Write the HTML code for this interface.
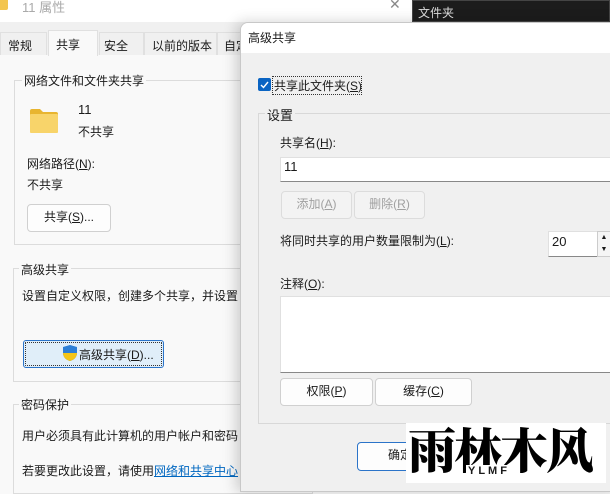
<!DOCTYPE html>
<html><head><meta charset="utf-8"><style>
*{margin:0;padding:0;box-sizing:border-box}
body{width:610px;height:483px;overflow:hidden;position:relative;background:#f9f9f9;font-family:"Liberation Sans","Noto Sans CJK SC",sans-serif;font-size:12px;color:#1a1a1a}
.a{position:absolute;white-space:nowrap}
.grp{position:absolute;border:1px solid #dcdcdc}
.lbl{position:absolute;background:inherit;padding:0 2px}
.btn{position:absolute;border:1px solid #d0d0d0;border-radius:4px;background:#fdfdfd;text-align:center;line-height:25px}
u{text-decoration:underline}
</style></head><body>
<div class="a" style="left:0;top:0;width:410px;height:22px;background:#fff"></div>
<div class="a" style="left:-6px;top:-2px;width:14px;height:12px;background:#f3c54f;border-radius:2px"></div>
<div class="a" style="left:22px;top:-3px;color:#aaa;font-size:13px">11 属性</div>
<div class="a" style="left:389px;top:-4px;color:#888;font-size:14px">✕</div>
<div class="a" style="left:412px;top:0;width:198px;height:22px;background:#1c1c1c;border:1px solid #444"></div>
<div class="a" style="left:418px;top:4px;color:#ddd;font-size:12px">文件夹</div>
<div class="a" style="left:0;top:22px;width:610px;height:33px;background:#f0f0f0"></div>
<div class="a" style="left:0;top:32px;width:47px;height:23px;border:1px solid #e0e0e0;border-bottom:none;padding:4px 7px">常规</div>
<div class="a" style="left:48px;top:30px;width:50px;height:26px;background:#f9f9f9;border:1px solid #e0e0e0;border-bottom:none;padding:5px 7px">共享</div>
<div class="a" style="left:99px;top:32px;width:45px;height:23px;border:1px solid #e0e0e0;border-bottom:none;padding:4px 4px">安全</div>
<div class="a" style="left:144px;top:32px;width:73px;height:23px;border:1px solid #e0e0e0;border-bottom:none;padding:4px 7px">以前的版本</div>
<div class="a" style="left:217px;top:32px;width:40px;height:23px;border:1px solid #e0e0e0;border-bottom:none;padding:4px 6px">自定</div>

<div class="grp" style="left:14px;top:80px;width:300px;height:165px"></div>
<div class="a" style="left:22px;top:72px;background:#f9f9f9;padding:0 2px">网络文件和文件夹共享</div>
<svg class="a" style="left:30px;top:108px" width="28" height="25"><path d="M0 3a2 2 0 0 1 2-2h8l3 3h13a2 2 0 0 1 2 2v2H0z" fill="#e8b530"/><rect x="0" y="6" width="28" height="19" rx="1" fill="#f8d46a"/></svg>
<div class="a" style="left:78px;top:102px;font-size:13px">11</div>
<div class="a" style="left:78px;top:123px">不共享</div>
<div class="a" style="left:27px;top:155px">网络路径(<u>N</u>):</div>
<div class="a" style="left:27px;top:176px">不共享</div>
<div class="btn" style="left:27px;top:204px;width:84px;height:28px">共享(<u>S</u>)...</div>

<div class="grp" style="left:13px;top:268px;width:300px;height:114px"></div>
<div class="a" style="left:19px;top:261px;background:#f9f9f9;padding:0 2px">高级共享</div>
<div class="a" style="left:22px;top:287px">设置自定义权限，创建多个共享，并设置</div>
<div class="a" style="left:23px;top:340px;width:141px;height:28px;border:1px solid #2b74c9;border-radius:3px;background:#e0eef9;outline:1px dotted #333;outline-offset:-3px"></div>
<svg class="a" style="left:63px;top:345px" width="14" height="16"><path d="M7 0L14 2v6c0 4-3 7-7 8C3 15 0 12 0 8V2z" fill="#2d7fd6"/><path d="M7 0v16C3 15 0 12 0 8h7z" fill="#f5c518"/><path d="M7 8h7c0 4-3 7-7 8z" fill="#f5c518"/></svg>
<div class="a" style="left:79px;top:346px">高级共享(<u>D</u>)...</div>

<div class="grp" style="left:13px;top:404px;width:300px;height:90px"></div>
<div class="a" style="left:19px;top:396px;background:#f9f9f9;padding:0 2px">密码保护</div>
<div class="a" style="left:22px;top:427px">用户必须具有此计算机的用户帐户和密码</div>
<div class="a" style="left:22px;top:462px">若要更改此设置，请使用<span style="color:#0067c0;text-decoration:underline">网络和共享中心</span></div>

<div class="a" style="left:240px;top:22px;width:380px;height:470px;background:#f0f0f0;border-radius:8px 0 0 0;border:1px solid #c8c8c8;box-shadow:-4px 0 14px rgba(0,0,0,.18);overflow:hidden">
<div style="height:30px;background:#fff"></div>
</div>
<div class="a" style="left:248px;top:29px">高级共享</div>
<div class="a" style="left:258px;top:78px;width:13px;height:13px;background:#0a64c3;border-radius:2px"></div>
<svg class="a" style="left:258px;top:78px" width="13" height="13"><path d="M3 7l2.5 2.5L10 4" stroke="#fff" stroke-width="1.4" fill="none"/></svg>
<div class="a" style="left:272px;top:76px;width:90px;height:19px;border:1px dotted #333"></div>
<div class="a" style="left:274px;top:77px">共享此文件夹(<u>S</u>)</div>

<div class="grp" style="left:258px;top:113px;width:360px;height:311px;border-color:#d8d8d8"></div>
<div class="a" style="left:265px;top:105px;background:#f0f0f0;padding:0 2px;font-size:13px">设置</div>
<div class="a" style="left:280px;top:134px">共享名(<u>H</u>):</div>
<div class="a" style="left:280px;top:157px;width:340px;height:25px;background:#fff;border:1px solid #e0e0e0;border-bottom:1px solid #888"></div>
<div class="a" style="left:284px;top:159px;font-size:13px">11</div>
<div class="btn" style="left:281px;top:191px;width:71px;height:28px;color:#a0a0a0;background:#f3f3f3;border-color:#dcdcdc">添加(<u>A</u>)</div>
<div class="btn" style="left:354px;top:191px;width:71px;height:28px;color:#a0a0a0;background:#f3f3f3;border-color:#dcdcdc">删除(<u>R</u>)</div>
<div class="a" style="left:280px;top:232px">将同时共享的用户数量限制为(<u>L</u>):</div>
<div class="a" style="left:548px;top:231px;width:50px;height:26px;background:#fff;border:1px solid #e0e0e0;border-bottom:1px solid #888"></div>
<div class="a" style="left:552px;top:234px;font-size:13px">20</div>
<div class="a" style="left:597px;top:231px;width:14px;height:26px;background:#f5f5f5;border:1px solid #ccc;font-size:7px;line-height:12px;text-align:center">▲<br>▼</div>
<div class="a" style="left:280px;top:275px">注释(<u>O</u>):</div>
<div class="a" style="left:280px;top:296px;width:340px;height:77px;background:#fff;border:1px solid #e0e0e0;border-bottom:1px solid #888"></div>
<div class="btn" style="left:280px;top:378px;width:93px;height:28px">权限(<u>P</u>)</div>
<div class="btn" style="left:375px;top:378px;width:97px;height:28px">缓存(<u>C</u>)</div>
<div class="btn" style="left:357px;top:442px;width:100px;height:29px;border-color:#2b74c9;text-align:left;padding-left:30px">确定</div>

<div class="a" style="left:406px;top:423px;width:200px;height:60px;background:#fff"></div>
<div class="a" style="left:408px;top:418px;font-family:'Noto Serif CJK SC','Liberation Serif',serif;font-weight:900;font-size:48px;line-height:60px;color:#000;letter-spacing:-2px">雨林木风</div>
<div class="a" style="left:466px;top:465px;font-size:11px;letter-spacing:3px;background:#fff;padding:0 2px;font-weight:bold">YLMF</div>
</body></html>
